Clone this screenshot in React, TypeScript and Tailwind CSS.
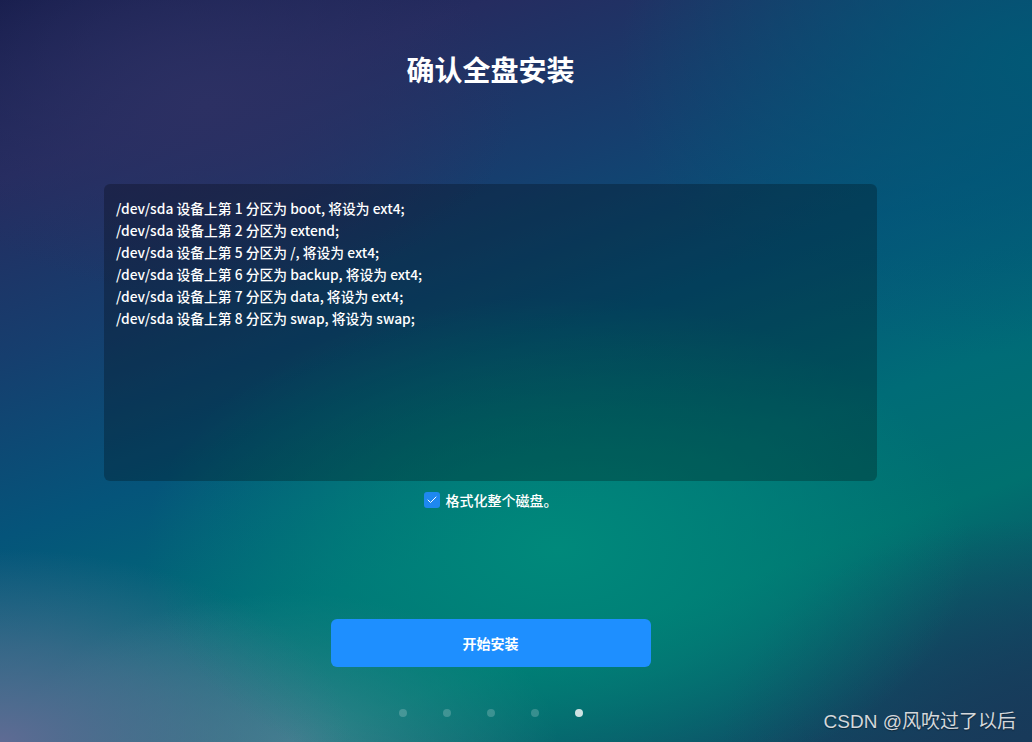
import { Check } from 'lucide-react';

const partitions = [
  '/dev/sda 设备上第 1 分区为 boot, 将设为 ext4;',
  '/dev/sda 设备上第 2 分区为 extend;',
  '/dev/sda 设备上第 5 分区为 /, 将设为 ext4;',
  '/dev/sda 设备上第 6 分区为 backup, 将设为 ext4;',
  '/dev/sda 设备上第 7 分区为 data, 将设为 ext4;',
  '/dev/sda 设备上第 8 分区为 swap, 将设为 swap;',
];

export default function App() {
  return (
    <div
      className="relative flex h-[742px] w-[1032px] flex-col items-center overflow-hidden pr-[51px] font-['Noto_Sans_CJK_SC','Noto_Sans',sans-serif] text-white bg-[radial-gradient(ellipse_40%_34%_at_54%_74%,#00897b_0%,rgba(0,137,123,0.55)_50%,rgba(0,137,123,0)_100%),radial-gradient(ellipse_34%_26%_at_0%_100%,#5f6b94_0%,rgba(95,107,148,0.55)_50%,rgba(95,107,148,0)_100%),radial-gradient(ellipse_26%_20%_at_28%_100%,rgba(72,132,148,0.85)_0%,rgba(72,132,148,0)_100%),radial-gradient(ellipse_30%_26%_at_20%_14%,#2c3063_0%,rgba(44,48,99,0)_100%),radial-gradient(ellipse_40%_40%_at_100%_8%,rgba(0,90,118,0.9)_0%,rgba(0,90,118,0)_100%),radial-gradient(ellipse_30%_30%_at_100%_100%,#183a5a_0%,rgba(24,58,90,0)_100%),linear-gradient(160deg,#161c4b_0%,#252c60_16%,#163e6e_32%,#05547a_48%,#006c77_64%,#00716f_76%,#0d4f66_90%,#183b5c_100%)]"
    >
      <h1 className="mt-[49px] text-[28px] leading-[40px] font-bold">确认全盘安装</h1>

      <div className="mt-[95px] h-[297px] w-[773px] rounded-md bg-black/25 px-3 pt-[13px]">
        {partitions.map((line) => (
          <div key={line} className="text-[13.8px] leading-[22px] font-medium">
            {line}
          </div>
        ))}
      </div>

      <label className="mt-[9px] flex h-5 items-center gap-[6px]">
        <span className="flex h-4 w-4 items-center justify-center rounded-[3px] bg-[#1e88f0]">
          <Check size={12} strokeWidth={2} className="text-white" />
        </span>
        <span className="text-[14px] font-medium">格式化整个磁盘。</span>
      </label>

      <button
        type="button"
        className="mt-[109px] h-12 w-80 rounded-md bg-[#1e8fff] text-[14px] font-bold text-white"
      >
        开始安装
      </button>

      <div className="mt-[42px] flex items-center gap-9">
        {[0, 1, 2, 3, 4].map((i) => (
          <span
            key={i}
            className={i === 4 ? 'h-2 w-2 rounded-full bg-white/80' : 'h-2 w-2 rounded-full bg-white/20'}
          />
        ))}
      </div>

      <div className="absolute right-[16px] bottom-[6px] text-[19px] text-[#d4d8dc] [text-shadow:0_1px_1px_rgba(0,0,0,0.4)] font-['Liberation_Sans','Noto_Sans_CJK_SC',sans-serif]">
        CSDN @风吹过了以后
      </div>
    </div>
  );
}
